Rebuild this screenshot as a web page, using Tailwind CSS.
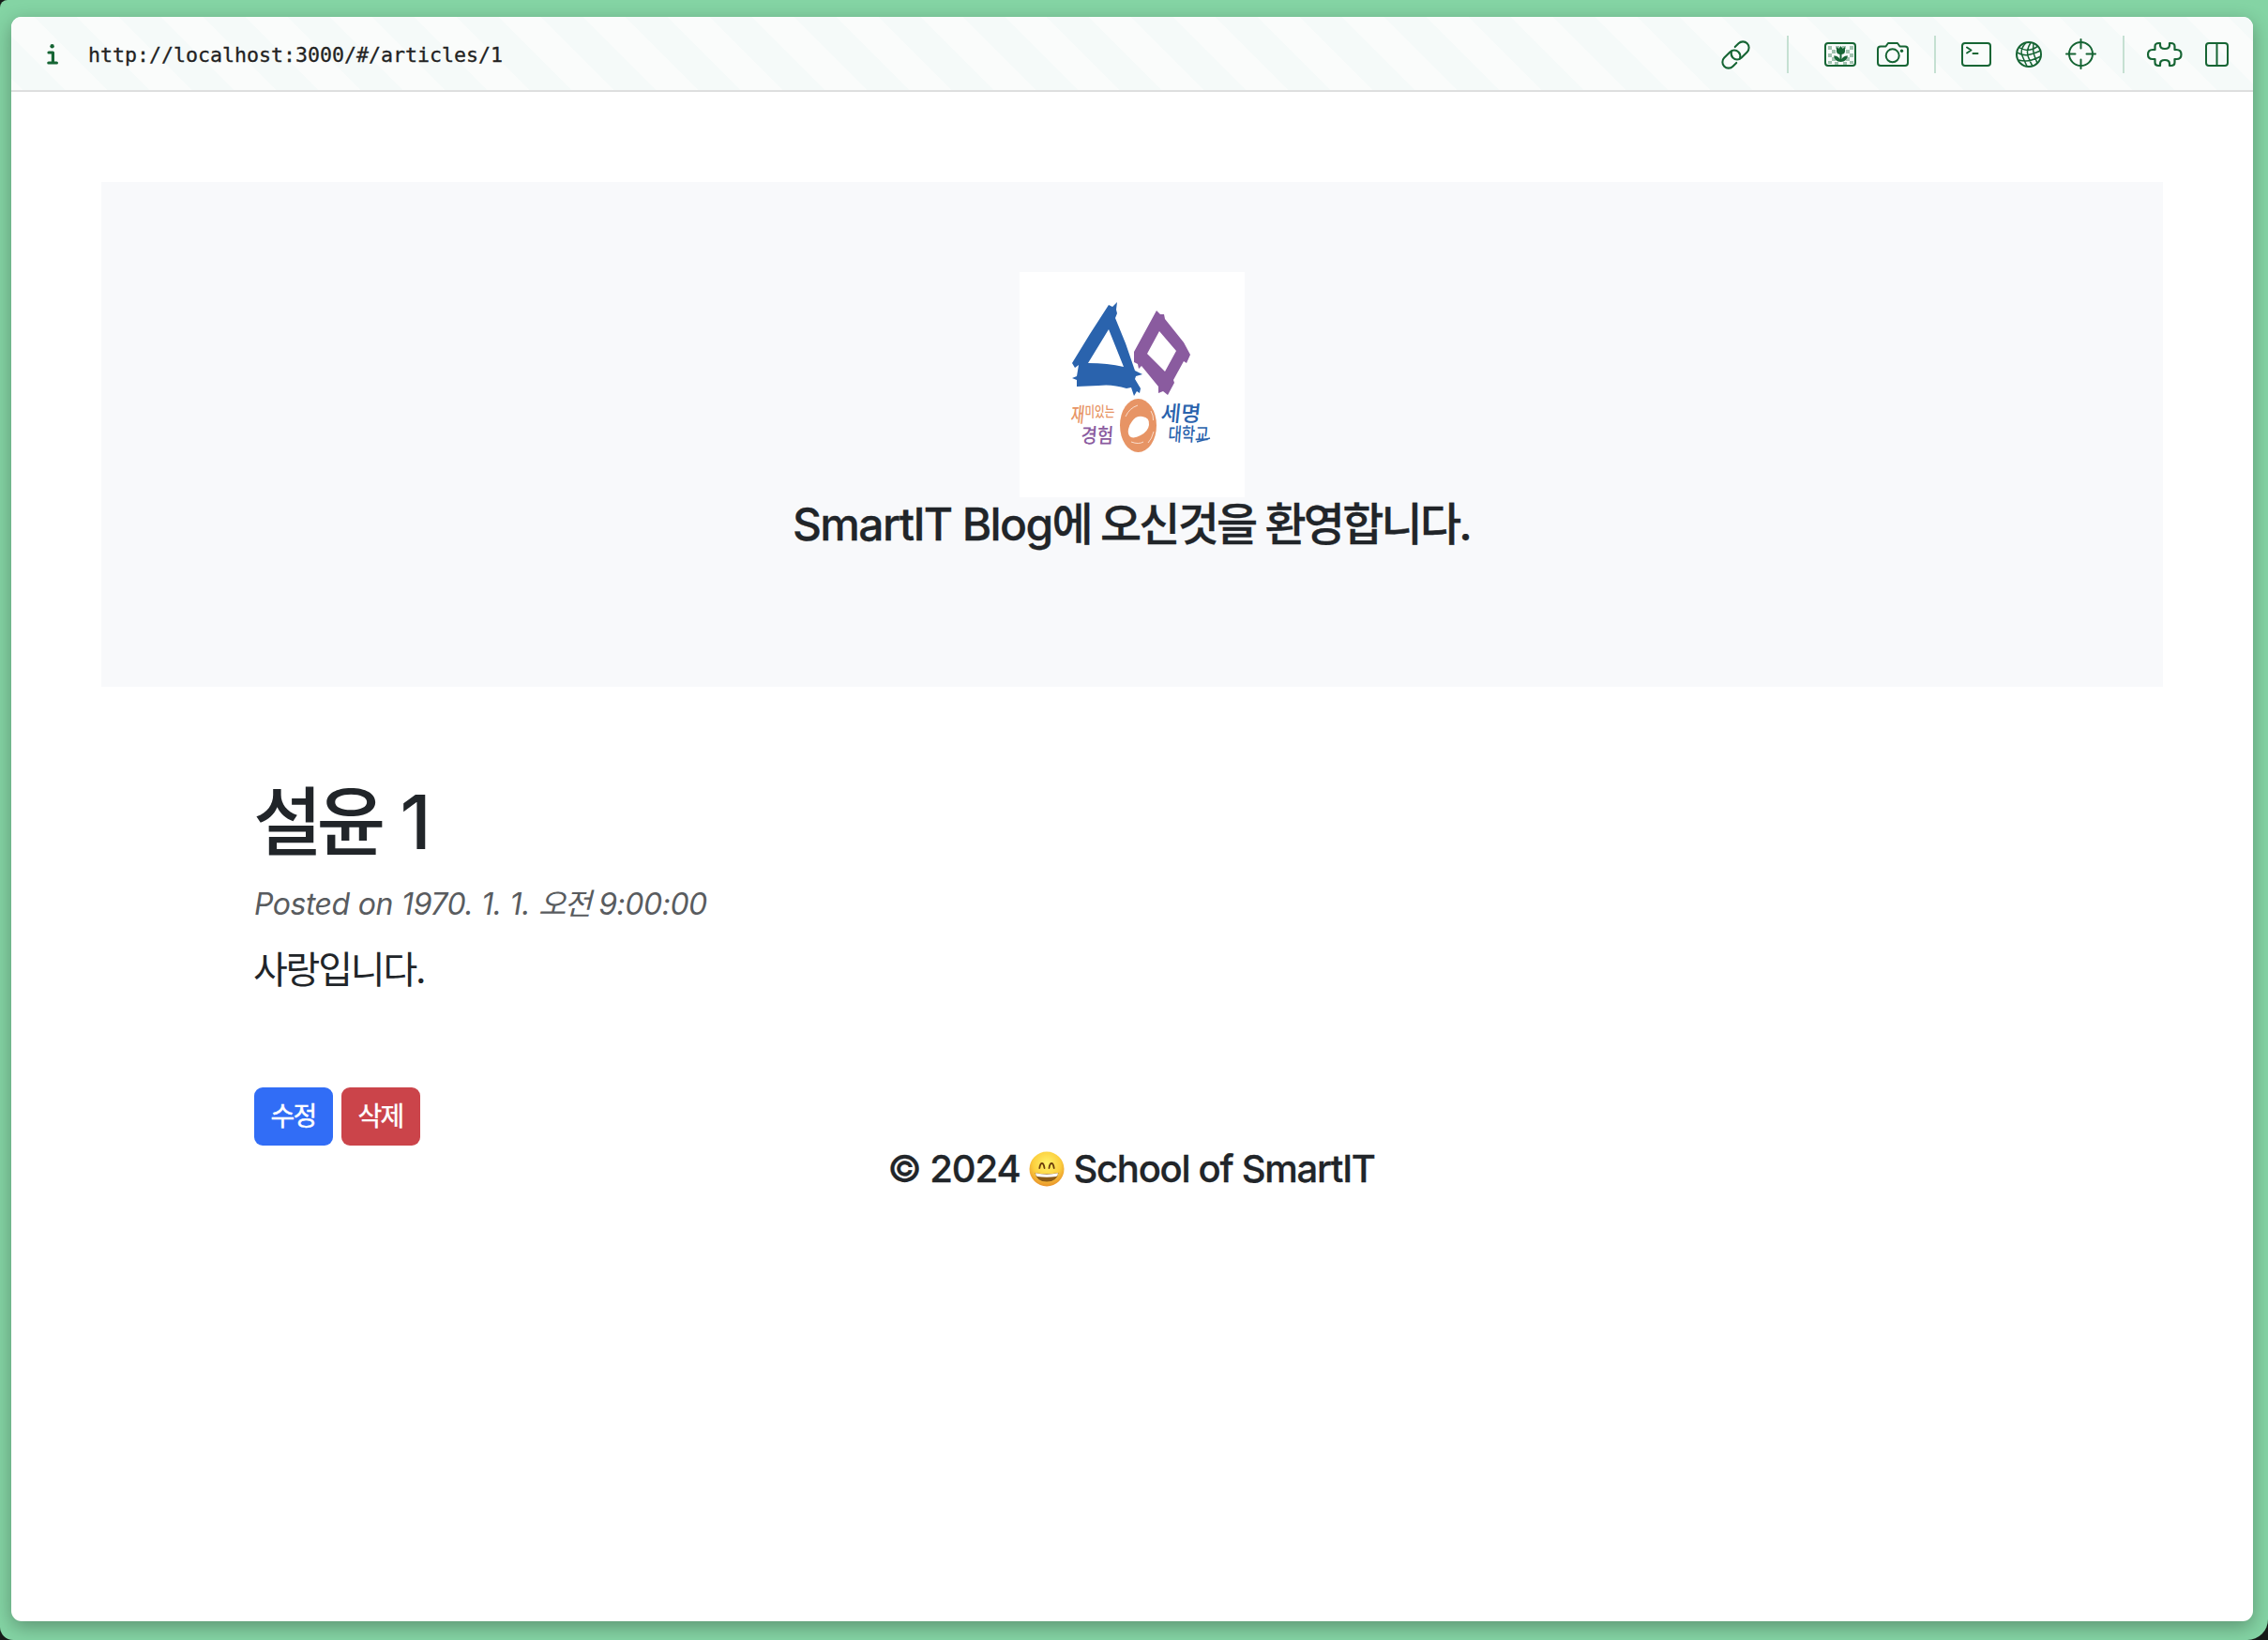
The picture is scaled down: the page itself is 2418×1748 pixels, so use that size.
<!DOCTYPE html>
<html lang="ko">
<head>
<meta charset="utf-8">
<title>SmartIT Blog</title>
<script src="https://cdn.jsdelivr.net/npm/@tailwindcss/browser@4"></script>
</head>
<body class="bg-[#161a18] font-['Inter','Noto_Sans_CJK_KR',sans-serif] text-[#212529]">
<div class="h-[1748px] w-[2418px] overflow-hidden rounded-tl-[8px] rounded-bl-[14px] rounded-br-[22px] bg-[#84d4a4] pt-[18px] pl-[12px]">
<div class="flex h-[1710px] w-[2390px] flex-col overflow-hidden rounded-[11px] bg-white shadow-[0_6px_20px_rgba(0,0,0,0.3)]">
  <header class="flex h-[80px] shrink-0 items-center border-b-2 border-[#dedfdf] bg-[repeating-linear-gradient(45deg,#fafcfb_0px,#fafcfb_9px,#f5faf9_9px,#f5faf9_40.8px,#fafcfb_40.8px,#fafcfb_63.6px)] pt-[2px] pr-[18px] pl-[38px]">
    <svg class="h-[22px] w-[12px]" viewBox="0 0 12 22" fill="none" stroke="#166534" stroke-width="3.2" stroke-linecap="round" stroke-linejoin="round"><circle cx="5.6" cy="2.2" r="2.2" fill="#166534" stroke="none"/><path d="M2 9h4.400v11M1.800 20h8.600"/></svg>
    <span class="ml-[32px] flex-1 pt-[2px] font-['DejaVu_Sans_Mono',monospace] text-[21.6px] whitespace-nowrap text-[#222] [-webkit-text-stroke:0.3px]">http://localhost:3000/#/articles/1</span>
    <div class="flex items-center">
      <svg class="size-[40px]" viewBox="0 0 40 40" fill="none" stroke="#166534" stroke-width="1.9" stroke-linecap="round"><g transform="translate(20.5 20.5) rotate(-45) scale(1.08)"><path d="M-5 6h-5a6 6 0 0 1-6-6a6 6 0 0 1 6-6h8a6 6 0 0 1 6 6a6 6 0 0 1-3 5"/><path d="M5-6h5a6 6 0 0 1 6 6a6 6 0 0 1-6 6h-8a6 6 0 0 1-6-6a6 6 0 0 1 3-5"/></g></svg>
      <div class="mx-[35px] h-[40px] w-[2px] bg-[#c5e0d2]"></div>
      <svg class="size-[40px]" viewBox="0 0 40 40" fill="none"><path fill="#a2c3b0" d="M7 11h4v4h-4zM11 15h4v4h-4zM7 19h4v4h-4zM11 23h4v4h-4zM7 27h4v3h-4zM15 11h4v3h-4zM22 11h4v3h-4zM30 11h4v4h-4zM26 15h4v4h-4zM30 19h4v4h-4zM26 23h4v4h-4zM30 27h4v3h-4zM14 28h4v3h-4zM23 28h4v3h-4z"/><path fill="#166534" d="M16 12l2.300 2 2.200-3 2.200 3 2.300-2v4.500q0 3-3.500 3.500v5q2-4 6.500-3.500q-1 6-7.500 6.500q-6.500-.5-7.500-6.500q4.500-.5 6.500 3.500v-5q-3.500-.5-3.500-3.500z"/><rect x="4" y="8" width="32" height="24" rx="3" stroke="#166534" stroke-width="2"/></svg>
      <svg class="ml-[16px] size-[40px]" viewBox="0 0 40 40" fill="none" stroke="#166534" stroke-width="2" stroke-linejoin="round"><path d="M7 11.500h5.500l2.500-3.500h10l2.500 3.500h5.500a3 3 0 0 1 3 3v14.500a3 3 0 0 1-3 3h-26a3 3 0 0 1-3-3v-14.500a3 3 0 0 1 3-3z"/><circle cx="19.700" cy="21.300" r="7"/><circle cx="29.500" cy="16.300" r="1.700" fill="#166534" stroke="none"/></svg>
      <div class="mr-[23px] ml-[24px] h-[40px] w-[2px] bg-[#c5e0d2]"></div>
      <svg class="size-[40px]" viewBox="0 0 40 40" fill="none" stroke="#166534" stroke-width="2" stroke-linecap="round" stroke-linejoin="round"><rect x="5" y="8" width="30" height="24" rx="3"/><path d="M10 12.500l4.500 3-4.500 3M16.500 19h5"/></svg>
      <svg class="ml-[16px] size-[40px]" viewBox="0 0 40 40" fill="none" stroke="#166534" stroke-width="2"><circle cx="20" cy="20" r="13"/><path stroke-width="1.500" d="M17 7.500q-7 7-4 14t5 11M22 7.500q-5 8-3 14t5 11M25 8.500q-1 8 1 13t3 8M9.500 12.500q6 4 12 2.500t8-4M7.500 18q7 4 14 2t11-4M9 26q8 2 14 0t10-4"/></svg>
      <svg class="ml-[16px] size-[40px]" viewBox="0 0 40 40" fill="none" stroke="#166534" stroke-width="2" stroke-linecap="round"><circle cx="19.500" cy="19.500" r="12.500"/><path d="M19.500 4v9.500M19.500 25.500v9.500M4 19.500h9.500M25.500 19.500h9.500"/></svg>
      <div class="mr-[23px] ml-[24px] h-[40px] w-[2px] bg-[#c5e0d2]"></div>
      <svg class="size-[40px]" viewBox="0 0 40 40" fill="none" stroke="#166534" stroke-width="2.200" stroke-linejoin="round"><path d="M9.500 15v-3.500q0-3.500 4-3.500h1.500v2q0 4 5 4t5-4v-2h1.500q4 0 4 3.500v3.500h2q5 0 5 5t-5 5h-2v3.500q0 3.500-4 3.500h-1.500v-2q0-4-5-4t-5 4v2h-1.500q-4 0-4-3.500v-3.500h-2.500q-5 0-5-5t5-5z"/></svg>
      <svg class="ml-[16px] size-[40px]" viewBox="0 0 40 40" fill="none" stroke="#166534" stroke-width="2"><rect x="8" y="8" width="23" height="24" rx="3"/><path d="M19.500 8v24"/></svg>
    </div>
  </header>

  <main class="flex flex-col px-[96px] pt-[96px]">
    <section class="flex h-[538px] flex-col items-center bg-[#f8f9fb] pt-[96px]">
      <svg class="size-[240px] bg-white" viewBox="0 0 240 240">
        <path fill="#2a63ad" fill-rule="evenodd" d="M95 35L99 37L104 32L103 40L104 44L102 49L113 76L123 105L131 109L124 111L123 114L129 124L128 129L125 127L122 132L119 123L114 124Q98 119 84 121L61 122L61 115L56 113L61 111L63 99L59 102L56 97L75 66ZM95 61L73 97Q94 97 111 101Z"/>
        <path fill="#8a5b9f" fill-rule="evenodd" d="M146 41L150 45L154 45L155 50L175 75L182 88L178 97L175 95L164 115L165 118L158 131L153 127L148 129L148 122L130 100L127 103L126 98L122 96L122 85ZM149 63L136 87L155 106L167 84Z"/>
        <ellipse cx="126.500" cy="163.500" rx="19.500" ry="28.500" fill="#e79465"/>
        <path fill="#fff" d="M120 159q4-6 11-5q8 1 7 9q-1 7-9 11q-7 4-11 1.500q-3-3-2-8q1-5 4-8.500z"/>
        <path d="M113 154q4-9 13-12M119 181q8 3 13 0M143 170q-2 8-6 12M140 148q3 5 2.500 10" fill="none" stroke="#fbe3d6" stroke-width=".9"/>
        <g font-family="Noto Sans CJK KR, sans-serif" font-weight="500">
          <text transform="translate(54 160) skewX(-6) scale(.78 1.100)" font-size="20" fill="#e79465">재</text>
          <text transform="translate(69.500 154) scale(.77 1)" font-size="15" fill="#e79465">미있는</text>
          <text transform="translate(65 182) skewX(-4) scale(.94 1.080)" font-size="20" fill="#8a5b9f">경험</text>
          <text transform="translate(150 159) skewX(-6)" font-size="23" fill="#2a63ad">세명</text>
          <text transform="translate(158 180) skewX(-4) scale(.82 1.050)" font-size="19" fill="#2a63ad">대학교</text>
          <path d="M189 181l14-4" stroke="#2a63ad" stroke-width="1.800"/>
        </g>
      </svg>
      <h3 class="mt-[1px] mr-[2px] text-[48px] leading-[56px] font-medium tracking-[-0.034em] whitespace-nowrap [-webkit-text-stroke:0.3px]">SmartIT Blog<span class="tracking-[-0.058em]">에 오신것을 환영합니다.</span></h3>
    </section>

    <article class="mt-[96px] flex flex-col pl-[163px]">
      <h1 class="-ml-[1px] text-[80px] leading-[96px] font-medium"><span class="tracking-[-0.075em]">설윤</span> 1</h1>
      <p class="mt-[16px] text-[32px] leading-[48px] tracking-[-0.015em] whitespace-pre text-[#595c5f] italic [word-spacing:0.6px]">Posted on 1970. 1. 1. <span class="tracking-[-0.06em]">오전</span> 9:00:00</p>
      <p class="mt-[16px] -ml-[1px] text-[40px] leading-[60px] tracking-[-0.055em]">사랑입니다.</p>
      <div class="mt-[95px] flex gap-[9px]">
        <button class="flex h-[62px] w-[84px] items-center justify-center rounded-[9px] bg-[#316df6] pr-[1px] text-[28px] tracking-[-0.06em] text-white [-webkit-text-stroke:0.4px]">수정</button>
        <button class="flex h-[62px] w-[84px] items-center justify-center rounded-[9px] bg-[#cb444a] pr-[1px] text-[28px] tracking-[-0.06em] text-white [-webkit-text-stroke:0.4px]">삭제</button>
      </div>
    </article>

    <footer class="mt-[1px] flex items-center justify-center text-[40px] leading-[48px] font-medium tracking-[-0.032em] whitespace-pre [-webkit-text-stroke:0.3px]"><span class="tracking-[-0.028em]">© 2024 </span><svg class="h-[38px] w-[38px]" viewBox="0 0 38 38"><defs><radialGradient id="face" cx=".5" cy=".35" r=".65"><stop offset="0" stop-color="#fff36b"/><stop offset=".6" stop-color="#fcd03f"/><stop offset="1" stop-color="#e8922a"/></radialGradient></defs><circle cx="19" cy="19" r="18.500" fill="url(#face)"/><path d="M11.300 18q.7-5 2.600-5t2.600 5M21.500 18q.7-5 2.600-5t2.600 5" fill="none" stroke="#6b3d0c" stroke-width="1.800" stroke-linecap="round"/><path d="M6.500 23q12.500 2.500 25 0q-1.500 9.500-12.500 9.500t-12.500-9.500z" fill="#8a5a18"/><path d="M7 23.300q12 2.700 24 0q0 3-2 3.700q-10 1.500-20 0q-2-.7-2-3.700z" fill="#fff"/></svg><span class="pr-[2px]"> School of SmartIT</span></footer>
  </main>
</div>
</div>
</body>
</html>
